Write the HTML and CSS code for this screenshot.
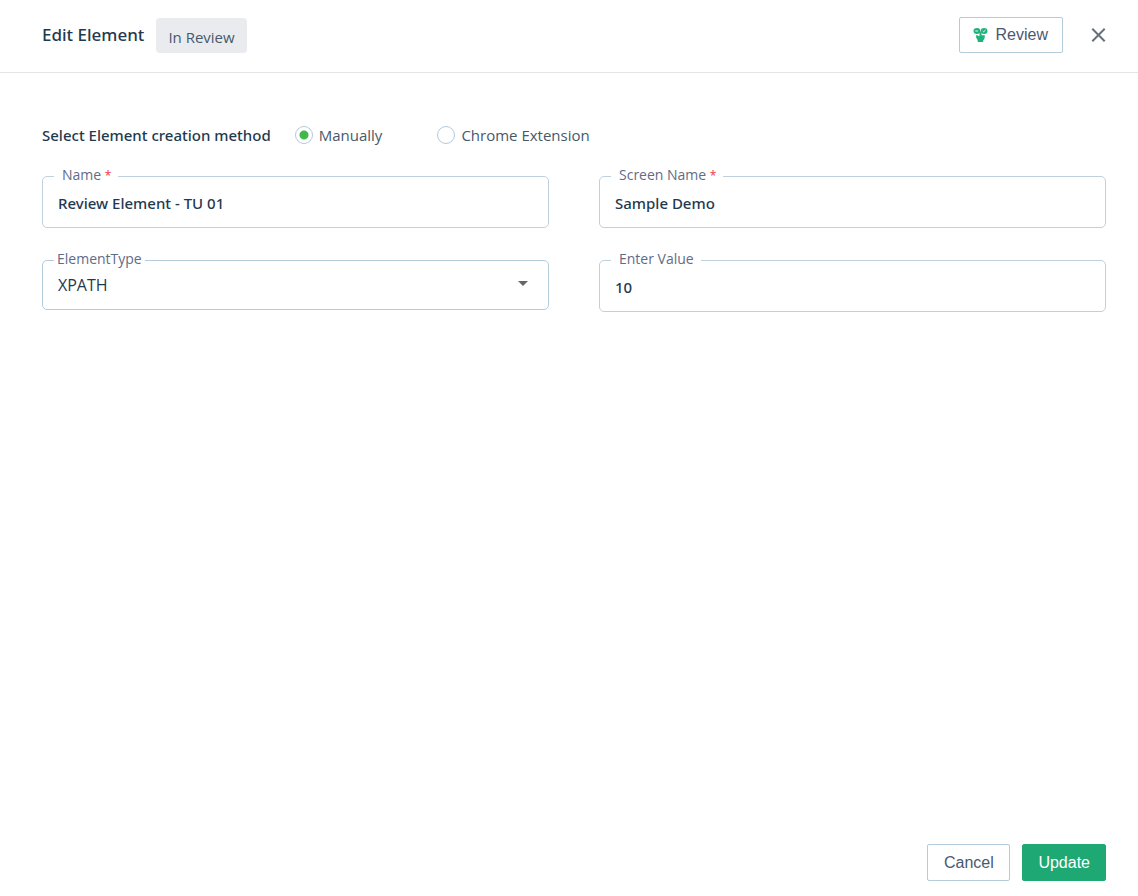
FILE: index.html
```html
<!DOCTYPE html>
<html lang="en">
<head>
<meta charset="utf-8">
<meta name="viewport" content="width=device-width, initial-scale=1">
<title>Edit Element</title>
<link rel="stylesheet" href="styles.css">
</head>
<body>
<form class="panel">
  <header class="header">
    <h1 class="title">Edit Element</h1>
    <span class="status">In Review</span>
    <div class="header-actions">
      <button type="button" class="btn btn-outline btn-review">
        <svg class="review-icon" viewBox="0 0 14 14" aria-hidden="true">
          <ellipse cx="3.400" cy="3" rx="3.400" ry="2.900" fill="#1fb27c"/>
          <ellipse cx="10.600" cy="3" rx="3.400" ry="2.900" fill="#1fb27c"/>
          <path d="M1.800 3h2.600M9.200 3l1 .8 1.800-1.800" fill="none" stroke="#fff" stroke-width=".9"/>
          <path d="M6 3.600h2V7.200h2.400c.8 0 1.100.5 1 1.100l-.7 2.900-1 1V14H4.200v-1.700L2.600 9.500V7.200H4L5 8h1z" fill="#1fb27c"/>
        </svg>
        Review
      </button>
      <button type="button" class="close" aria-label="Close">
        <svg class="close-icon" viewBox="0 0 14 14" aria-hidden="true"><path d="M.8.8l12.400 12.400M13.200.8L.8 13.200" fill="none" stroke="#66707b" stroke-width="2"/></svg>
      </button>
    </div>
  </header>
  <main class="content">
    <div class="method" role="radiogroup" aria-labelledby="method-label">
      <span class="method-label" id="method-label">Select Element creation method</span>
      <label class="option"><input class="radio" type="radio" name="method" checked>Manually</label>
      <label class="option"><input class="radio" type="radio" name="method">Chrome Extension</label>
    </div>
    <div class="fields">
      <div class="field">
        <label class="field-label" for="name">Name <span class="required">*</span></label>
        <input class="control" id="name" type="text" value="Review Element - TU 01" required>
      </div>
      <div class="field">
        <label class="field-label" for="screen">Screen Name <span class="required">*</span></label>
        <input class="control" id="screen" type="text" value="Sample Demo" required>
      </div>
      <div class="field">
        <label class="field-label field-label-tight" for="type">ElementType</label>
        <select class="control control-select" id="type"><option>XPATH</option></select>
        <svg class="caret" viewBox="0 0 10 5" aria-hidden="true"><path d="M0 0h10L5 5z" fill="#666"/></svg>
      </div>
      <div class="field">
        <label class="field-label" for="value">Enter Value</label>
        <input class="control" id="value" type="text" value="10">
      </div>
    </div>
  </main>
  <footer class="footer">
    <button type="button" class="btn btn-outline">Cancel</button>
    <button type="submit" class="btn btn-primary">Update</button>
  </footer>
</form>
</body>
</html>
```
FILE: styles.css
```css
* {
  box-sizing: border-box;
}

body {
  margin: 0;
  background: #fff;
  color: #1f3a50;
  font-family: "Segoe UI", "Open Sans", "Noto Sans", sans-serif;
  font-size: 15px;
}

.panel {
  display: flex;
  flex-direction: column;
  min-height: 100vh;
}

.header {
  display: flex;
  align-items: center;
  gap: 12px;
  padding: 17px 32px 19px 42px;
  border-bottom: 1px solid #e2e4e6;
}

.title {
  margin: 0;
  font-family: "Segoe UI", "Noto Sans", sans-serif;
  font-size: 17px;
  font-weight: 500;
  line-height: 24px;
}

.status {
  padding: 9px 12px 6px;
  border-radius: 4px;
  background: #eaebef;
  color: #46596b;
  line-height: 20px;
}

.header-actions {
  display: flex;
  align-items: center;
  gap: 28px;
  margin-left: auto;
}

.btn {
  height: 37px;
  padding: 0 15px;
  border: 1px solid #b3cbda;
  border-radius: 2px;
  background: #fff;
  color: #4b5873;
  font-family: "Liberation Sans", Arial, sans-serif;
  font-size: 16px;
}

.footer .btn {
  min-width: 83px;
}

.btn-review {
  display: flex;
  align-items: center;
  gap: 8px;
  height: 36px;
  padding: 0 14px 0 13px;
}

.review-icon {
  width: 15px;
  height: 14px;
}

.btn-primary {
  border-color: #1ea974;
  background: #1ea974;
  color: #fff;
}

.close {
  display: flex;
  padding: 0;
  border: 0;
  background: none;
}

.close-icon {
  width: 15px;
  height: 14px;
}

.content {
  flex: 1;
  padding: 50px 32px 24px 42px;
}

.method {
  display: flex;
  align-items: center;
  line-height: 24px;
}

.method-label {
  margin-right: 24px;
  font-family: "Segoe UI", "Noto Sans", sans-serif;
  font-weight: 500;
}

.option {
  display: flex;
  align-items: center;
  gap: 6px;
  margin-right: 55px;
  color: #46596b;
}

.radio {
  appearance: none;
  width: 18px;
  height: 18px;
  margin: 0;
  border: 1px solid #b3cbda;
  border-radius: 50%;
  background: #fff;
}

.radio:checked {
  background: radial-gradient(circle, #3fb94a 4px, #fff 5px);
}

.fields {
  display: grid;
  grid-template-columns: 1fr 1fr;
  align-items: start;
  gap: 32px 50px;
  margin-top: 29px;
}

.field {
  position: relative;
}

.field-label {
  position: absolute;
  top: -11px;
  left: 12px;
  padding: 0 7px 0 8px;
  background: #fff;
  color: #5f6c86;
  font-size: 14px;
  line-height: 20px;
}

.field-label-tight {
  padding: 0 3px;
}

.required {
  color: #ee3349;
  font-size: 12px;
}

.control {
  display: block;
  width: 100%;
  height: 52px;
  padding: 2px 15px 0;
  border: 1px solid #c0d0dc;
  border-radius: 5px;
  background: #fff;
  color: #1f3a50;
  font-family: "Segoe UI", "Noto Sans", sans-serif;
  font-size: 15px;
  font-weight: 500;
}

.control-select {
  appearance: none;
  height: 50px;
  padding-top: 0;
  border-color: #b3cbda;
  font-family: inherit;
  font-size: 16px;
  font-weight: 400;
}

.caret {
  position: absolute;
  top: 21px;
  right: 21px;
  width: 10px;
  height: 5px;
  pointer-events: none;
}

.footer {
  display: flex;
  justify-content: flex-end;
  gap: 12px;
  padding: 0 32px 15px;
}
```
